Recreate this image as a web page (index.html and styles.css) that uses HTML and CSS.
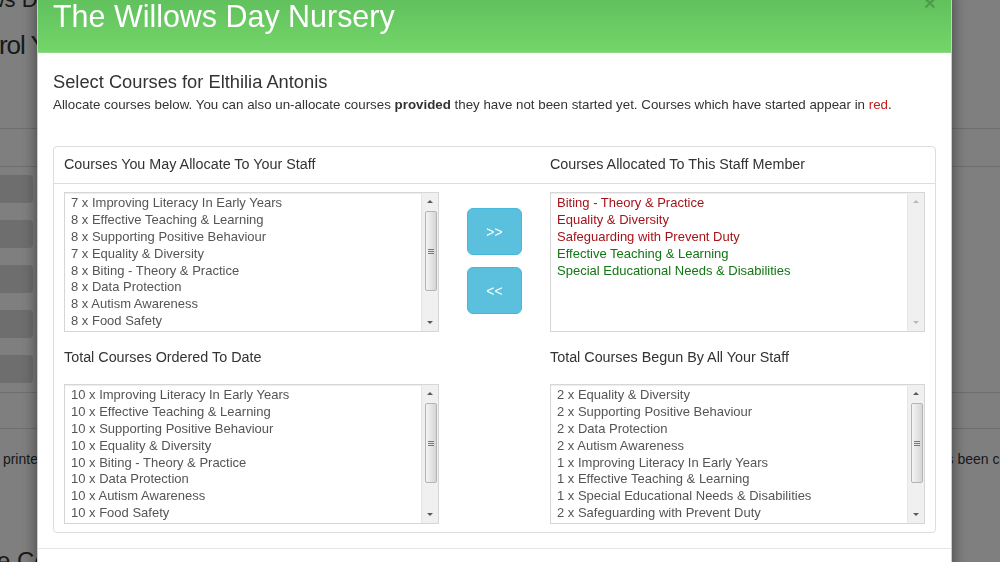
FILE: index.html
```html
<!DOCTYPE html>
<html lang="en">
<head>
    <meta charset="UTF-8">
    <meta name="viewport" content="width=device-width, initial-scale=1.0">
    <title>Select Courses</title>
    <link rel="stylesheet" href="styles.css">
</head>
<body>
    <!-- page behind the dialog -->
    <div class="page">
        <div class="page-top">Willows Day Nursery Staff</div>
        <h1 class="page-title">Control Your Staff</h1>
        <div class="band band-top"></div>
        <div class="fields">
            <div class="field"></div>
            <div class="field"></div>
            <div class="field"></div>
            <div class="field"></div>
            <div class="field"></div>
        </div>
        <div class="band band-bottom"></div>
        <p class="note">
            <span class="note-left">can be printed once the course is finished and the final assessment</span>
            <span class="note-right">has been completed.</span>
        </p>
        <h2 class="page-sub">Online Courses</h2>
    </div>

    <div class="backdrop"></div>

    <div class="modal">
        <div class="modal-header">
            <span class="close">&times;</span>
            <h3 class="modal-title">The Willows Day Nursery</h3>
        </div>
        <div class="modal-body">
            <h4 class="select-title">Select Courses for Elthilia Antonis</h4>
            <p class="intro">Allocate courses below. You can also un-allocate courses <b>provided</b> they have not been started yet. Courses which have started appear in <span class="red">red</span>.</p>

            <div class="panel">
                <div class="panel-heading">
                    <div>Courses You May Allocate To Your Staff</div>
                    <div class="col-right">Courses Allocated To This Staff Member</div>
                </div>
                <div class="panel-body">
                    <div class="listbox">
                        <ul class="options">
                            <li>7 x Improving Literacy In Early Years</li>
                            <li>8 x Effective Teaching &amp; Learning</li>
                            <li>8 x Supporting Positive Behaviour</li>
                            <li>7 x Equality &amp; Diversity</li>
                            <li>8 x Biting - Theory &amp; Practice</li>
                            <li>8 x Data Protection</li>
                            <li>8 x Autism Awareness</li>
                            <li>8 x Food Safety</li>
                        </ul>
                        <div class="scrollbar">
                            <span class="scroll-arrow up"></span>
                            <span class="thumb"></span>
                            <span class="track"></span>
                            <span class="scroll-arrow down"></span>
                        </div>
                    </div>

                    <div class="move-buttons">
                        <button class="btn-move">&gt;&gt;</button>
                        <button class="btn-move">&lt;&lt;</button>
                    </div>

                    <div class="listbox">
                        <ul class="options">
                            <li class="started">Biting - Theory &amp; Practice</li>
                            <li class="started">Equality &amp; Diversity</li>
                            <li class="started">Safeguarding with Prevent Duty</li>
                            <li class="pending">Effective Teaching &amp; Learning</li>
                            <li class="pending">Special Educational Needs &amp; Disabilities</li>
                        </ul>
                        <div class="scrollbar disabled">
                            <span class="scroll-arrow up"></span>
                            <span class="track"></span>
                            <span class="scroll-arrow down"></span>
                        </div>
                    </div>

                    <div class="list-label">Total Courses Ordered To Date</div>
                    <div class="list-label col-right">Total Courses Begun By All Your Staff</div>

                    <div class="listbox">
                        <ul class="options">
                            <li>10 x Improving Literacy In Early Years</li>
                            <li>10 x Effective Teaching &amp; Learning</li>
                            <li>10 x Supporting Positive Behaviour</li>
                            <li>10 x Equality &amp; Diversity</li>
                            <li>10 x Biting - Theory &amp; Practice</li>
                            <li>10 x Data Protection</li>
                            <li>10 x Autism Awareness</li>
                            <li>10 x Food Safety</li>
                        </ul>
                        <div class="scrollbar">
                            <span class="scroll-arrow up"></span>
                            <span class="thumb"></span>
                            <span class="track"></span>
                            <span class="scroll-arrow down"></span>
                        </div>
                    </div>

                    <div class="listbox col-right">
                        <ul class="options">
                            <li>2 x Equality &amp; Diversity</li>
                            <li>2 x Supporting Positive Behaviour</li>
                            <li>2 x Data Protection</li>
                            <li>2 x Autism Awareness</li>
                            <li>1 x Improving Literacy In Early Years</li>
                            <li>1 x Effective Teaching &amp; Learning</li>
                            <li>1 x Special Educational Needs &amp; Disabilities</li>
                            <li>2 x Safeguarding with Prevent Duty</li>
                        </ul>
                        <div class="scrollbar">
                            <span class="scroll-arrow up"></span>
                            <span class="thumb"></span>
                            <span class="track"></span>
                            <span class="scroll-arrow down"></span>
                        </div>
                    </div>
                </div>
            </div>
        </div>
        <div class="modal-footer"></div>
    </div>
</body>
</html>
```

FILE: styles.css
```css
* {
    box-sizing: border-box;
}
body {
    margin: 0;
    height: 562px;
    overflow: hidden;
    background: #fff;
    color: #333;
    font-family: "Liberation Sans", Arial, sans-serif;
    font-size: 14px;
}

/* page behind the dialog */
.page {
    margin-left: -59px;
    width: 1120px;
}
.page-top {
    margin-top: -14px;
    font-size: 22px;
    line-height: 28px;
}
.page-title {
    margin: 14px 0 0;
    padding-left: 7px;
    font-size: 26px;
    line-height: 34px;
    letter-spacing: -1px;
    font-weight: normal;
}
.band {
    border-top: 1px solid #ddd;
    border-bottom: 1px solid #ddd;
}
.band-top {
    margin-top: 66px;
    height: 39px;
}
.fields {
    display: flex;
    flex-direction: column;
    gap: 17px;
    padding: 8px 0 9px;
}
.field {
    width: 92px;
    height: 28px;
    background: #ddd;
    border-radius: 4px;
}
.band-bottom {
    height: 37px;
}
.note {
    display: flex;
    margin: 20px 0 0;
    line-height: 20px;
    white-space: nowrap;
}
.note-left {
    width: 980px;
    margin-left: 16px;
}
.page-sub {
    margin: 78px 0 0;
    font-size: 24px;
    font-weight: normal;
}

.backdrop {
    position: fixed;
    top: 0;
    left: 0;
    right: 0;
    bottom: 0;
    background: rgba(0, 0, 0, 0.5);
}

/* dialog */
.modal {
    position: fixed;
    top: -16px;
    left: 37px;
    width: 915px;
    background: #fff;
    border: 1px solid rgba(0, 0, 0, 0.2);
    border-radius: 6px;
    box-shadow: 0 5px 15px rgba(0, 0, 0, 0.5);
}
.modal-header {
    padding: 15px 15px 19px;
    background: linear-gradient(#5bbc5a, #74d56a);
    border-bottom: 1px solid #8edb86;
    border-radius: 5px 5px 0 0;
}
.modal-title {
    margin: 0;
    color: #fff;
    font-size: 30.45px;
    line-height: 33px;
    font-weight: normal;
}
.close {
    float: right;
    margin-top: -8px;
    font-size: 21px;
    font-weight: bold;
    line-height: 1;
    color: #000;
    opacity: 0.2;
}
.modal-body {
    padding: 19px 15px 15px;
}
.select-title {
    margin: 0;
    font-size: 18.3px;
    line-height: 19.8px;
    font-weight: normal;
}
.intro {
    margin: 4px 0 32px;
    font-size: 13.33px;
    line-height: 18.6px;
}
.red {
    color: #c0201e;
}
.modal-footer {
    height: 30px;
    border-top: 1px solid #e5e5e5;
}

/* course panel */
.panel {
    border: 1px solid #ddd;
    border-radius: 4px;
}
.panel-heading {
    display: grid;
    grid-template-columns: 1fr 111px 1fr;
    padding: 7px 10px 9px;
    font-size: 14.35px;
    line-height: 20px;
    border-bottom: 1px solid #ddd;
}
.col-right {
    grid-column: 3;
}
.panel-body {
    display: grid;
    grid-template-columns: 1fr 111px 1fr;
    padding: 8px 10px;
}
.list-label {
    margin: 15px 0 17px;
    font-size: 14.35px;
    line-height: 20px;
}

.listbox {
    display: flex;
    height: 140px;
    background: #fff;
    border: 1px solid #d6d6d6;
    box-shadow: inset 0 1px 1px rgba(0, 0, 0, 0.075);
}
.options {
    flex: 1;
    margin: 0;
    padding: 2px 6px 0;
    list-style: none;
    overflow: hidden;
    white-space: nowrap;
    color: #555;
    font-size: 13px;
    line-height: 16.8px;
}
.options .started {
    color: #a3141a;
}
.options .pending {
    color: #137513;
}

/* drawn scrollbar */
.scrollbar {
    width: 17px;
    display: flex;
    flex-direction: column;
    background: #f0f0f0;
    border-left: 1px solid #e6e6e6;
}
.scroll-arrow {
    height: 17px;
    display: flex;
    align-items: center;
    justify-content: center;
}
.scroll-arrow::before {
    content: "";
    border-left: 3px solid transparent;
    border-right: 3px solid transparent;
}
.up::before {
    border-bottom: 3px solid #5a5a5a;
}
.down::before {
    border-top: 3px solid #5a5a5a;
}
.scrollbar.disabled .up::before {
    border-bottom-color: #b8b8b8;
}
.scrollbar.disabled .down::before {
    border-top-color: #b8b8b8;
}
.thumb {
    height: 80px;
    margin: 1px 1px 0 3px;
    display: flex;
    align-items: center;
    justify-content: center;
    border: 1px solid #b4b4b4;
    border-radius: 2px;
    background: linear-gradient(to right, #f4f4f4, #d6d6d6);
}
.thumb::before {
    content: "";
    width: 6px;
    height: 5px;
    background: repeating-linear-gradient(#777 0 1px, transparent 1px 2px);
}
.track {
    flex: 1;
}

/* move buttons */
.move-buttons {
    display: flex;
    flex-direction: column;
    align-items: center;
    gap: 12px;
    padding-top: 16px;
}
.btn-move {
    width: 55px;
    height: 47px;
    background: #5bc0de;
    border: 1px solid #46b8da;
    border-radius: 6px;
    color: #fff;
    font-family: "Liberation Sans", Arial, sans-serif;
    font-size: 14px;
}
```
